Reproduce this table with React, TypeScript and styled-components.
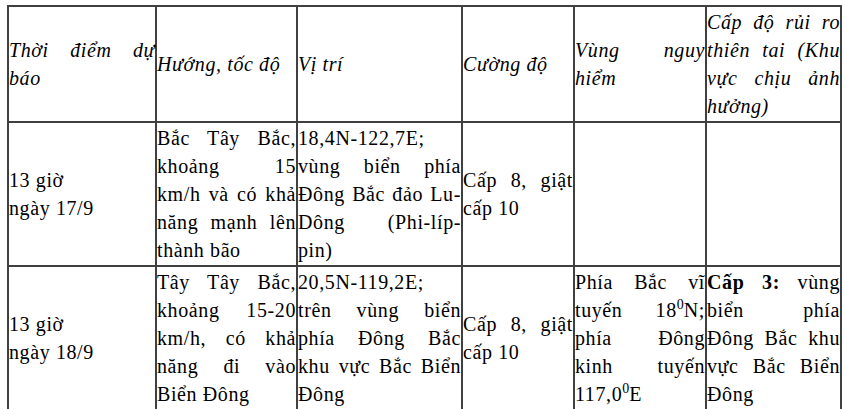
import React from 'react';
import styled, { createGlobalStyle } from 'styled-components';

const GlobalStyle = createGlobalStyle`
  body {
    margin: 0;
    background: #ffffff;
    color: #000000;
    font-family: "Liberation Serif", "Times New Roman", serif;
    font-size: 20px;
    line-height: 28px;
    letter-spacing: 0.6px;
  }
`;

const Sheet = styled.div`
  display: grid;
  grid-template-columns: 146px 139px 163px 110px 130px 133px;
  gap: 2px;
  padding: 2px;
  margin: 5px 0 0 7px;
  width: max-content;
  background: #404040;
`;

const Cell = styled.div<{ $head?: boolean }>`
  display: flex;
  flex-direction: column;
  justify-content: center;
  padding: 1px 0;
  background: #ffffff;
  font-style: ${(p) => (p.$head ? 'italic' : 'normal')};
`;

const Line = styled.span<{ $justify: boolean }>`
  display: block;
  white-space: nowrap;
  text-align: left;
  text-align-last: ${(p) => (p.$justify ? 'justify' : 'left')};
`;

const Sup = styled.sup`
  font-size: 0.7em;
  line-height: 0;
  vertical-align: super;
  letter-spacing: 0;
`;

const Strong = styled.b`
  font-weight: bold;
`;

type CellData = { lines: React.ReactNode[]; plain?: boolean };

const header: CellData[] = [
  { lines: ['Thời điểm dự', 'báo'] },
  { lines: ['Hướng, tốc độ'] },
  { lines: ['Vị trí'] },
  { lines: ['Cường độ'] },
  { lines: ['Vùng nguy', 'hiểm'] },
  { lines: ['Cấp độ rủi ro', 'thiên tai (Khu', 'vực chịu ảnh', 'hưởng)'] },
];

const rows: CellData[][] = [
  [
    { lines: ['13 giờ', 'ngày 17/9'], plain: true },
    { lines: ['Bắc Tây Bắc,', 'khoảng 15', 'km/h và có khả', 'năng mạnh lên', 'thành bão'] },
    { lines: ['18,4N-122,7E;', 'vùng biển phía', 'Đông Bắc đảo Lu-', 'Dông (Phi-líp-', 'pin)'] },
    { lines: ['Cấp 8, giật', 'cấp 10'] },
    { lines: [] },
    { lines: [] },
  ],
  [
    { lines: ['13 giờ', 'ngày 18/9'], plain: true },
    { lines: ['Tây Tây Bắc,', 'khoảng 15-20', 'km/h, có khả', 'năng đi vào', 'Biển Đông'] },
    { lines: ['20,5N-119,2E;', 'trên vùng biển', 'phía Đông Bắc', 'khu vực Bắc Biển', 'Đông'] },
    { lines: ['Cấp 8, giật', 'cấp 10'] },
    {
      lines: [
        'Phía Bắc vĩ',
        <>tuyến 18<Sup>0</Sup>N;</>,
        'phía Đông',
        'kinh tuyến',
        <>117,0<Sup>0</Sup>E</>,
      ],
    },
    {
      lines: [
        <><Strong>Cấp 3:</Strong> vùng</>,
        'biển phía',
        'Đông Bắc khu',
        'vực Bắc Biển',
        'Đông',
      ],
    },
  ],
];

const renderCell = (cell: CellData, key: number, head?: boolean) => (
  <Cell key={key} $head={head}>
    {cell.lines.map((line, i) => (
      <Line key={i} $justify={!cell.plain && i < cell.lines.length - 1}>
        {line}
      </Line>
    ))}
  </Cell>
);

const App: React.FC = () => {
  return (
    <>
      <GlobalStyle />
      <Sheet>
        {header.map((cell, i) => renderCell(cell, i, true))}
        {rows.map((row, r) => (
          <React.Fragment key={r}>{row.map((cell, i) => renderCell(cell, i))}</React.Fragment>
        ))}
      </Sheet>
    </>
  );
};

export default App;
